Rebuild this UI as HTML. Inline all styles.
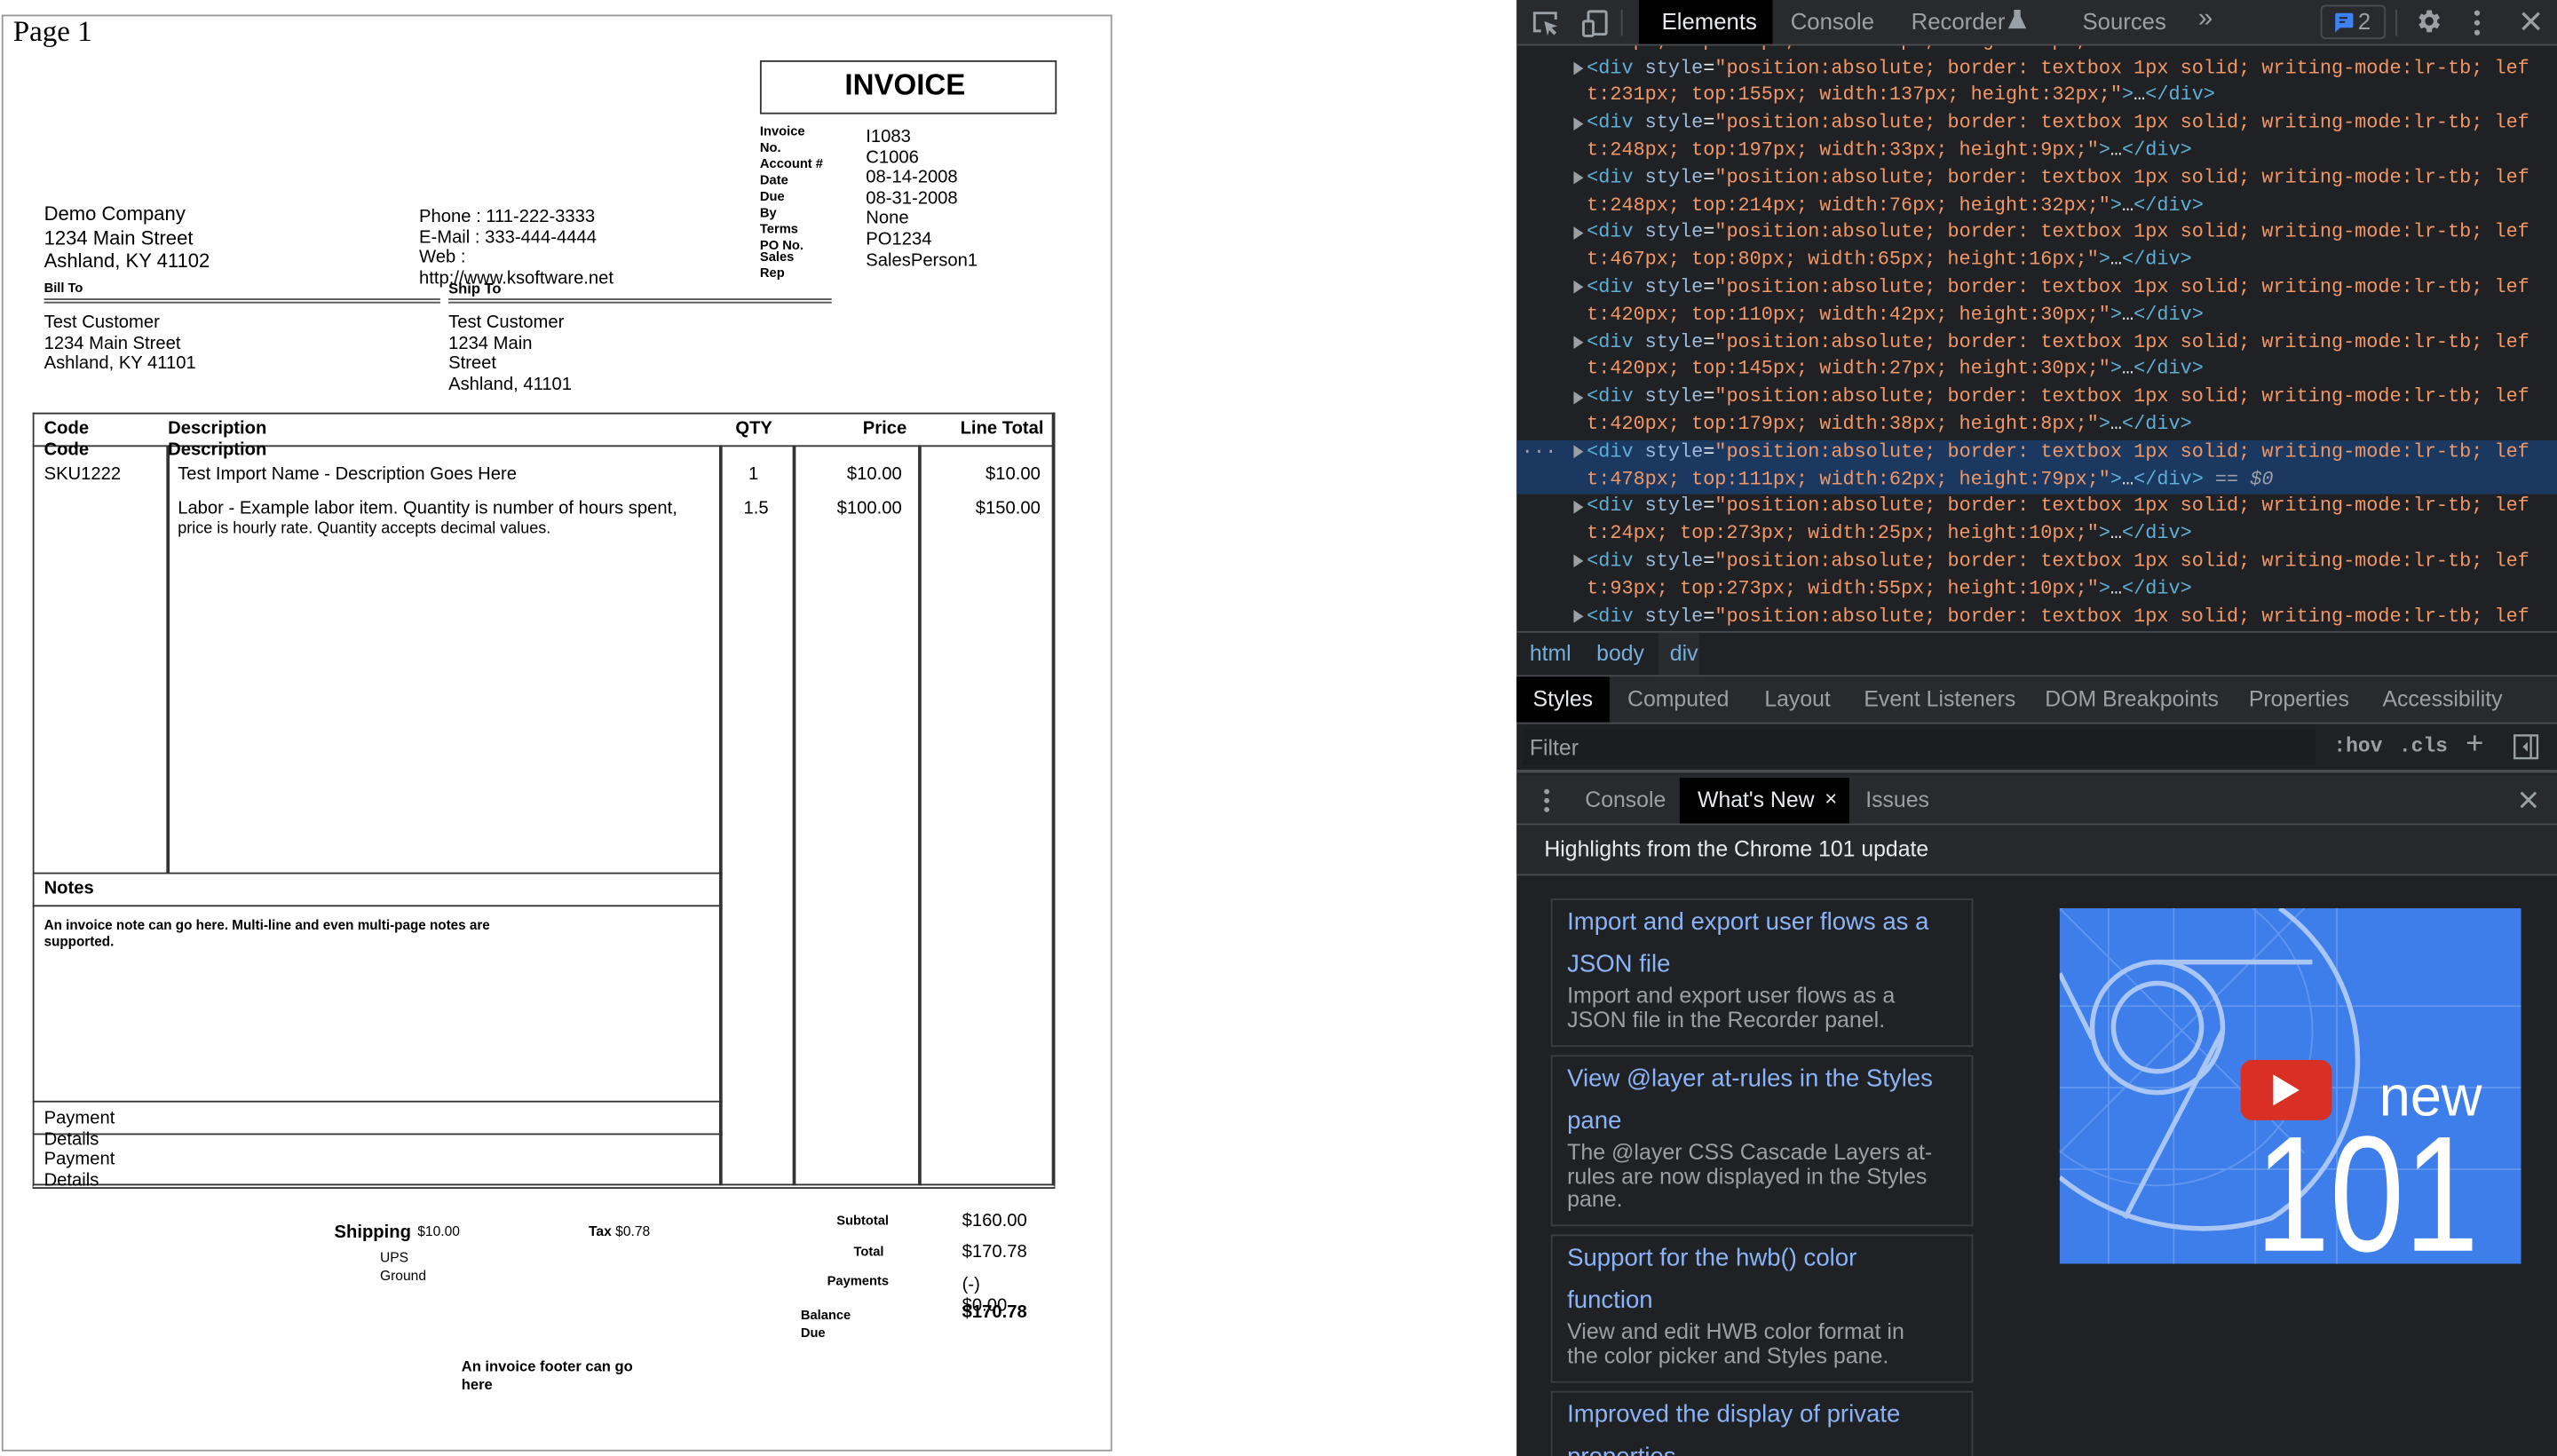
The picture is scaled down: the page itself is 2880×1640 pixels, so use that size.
<!DOCTYPE html>
<html><head><meta charset="utf-8">
<style>
html,body{margin:0;padding:0;width:2880px;height:1640px;overflow:hidden;background:#fff}
#s{position:absolute;left:0;top:0;width:1568px;height:893px;transform:scale(1.83673);transform-origin:0 0;font-family:"Liberation Sans",Arial,sans-serif}
.a{position:absolute;white-space:nowrap;line-height:1}
.b{font-weight:bold}
.r{text-align:right}
.hl{position:absolute;background:#333}
#dt{position:absolute;left:930px;top:0;width:638px;height:893px;background:#202124;overflow:hidden;color:#9aa0a6}
#dt .a{color:#9aa0a6}
.m{font-family:"Liberation Mono","DejaVu Sans Mono",monospace;font-size:11.9px}
.row{position:absolute;left:43px;height:16.8px;line-height:16.8px;white-space:pre}
.t{color:#5db0d7}.n{color:#9bbbdc}.v{color:#f29766}.w{color:#e8eaed}
.tri{position:absolute;left:35px;width:0;height:0;border-left:6px solid #9aa0a6;border-top:4px solid transparent;border-bottom:4px solid transparent}
.card{position:absolute;left:21px;width:257px;border:1px solid #3c3d40}
.ct{position:absolute;left:9px;color:#8ab4f8;font-size:15px;line-height:26px;white-space:nowrap}
.cd{position:absolute;left:9px;color:#9aa0a6;font-size:13.6px;line-height:14.6px;white-space:nowrap}
</style></head><body><div id="s">
<div style="position:absolute;left:1px;top:9px;width:679px;height:879px;border:1px solid #999"></div>
<div class="a" style="left:8px;top:10px;font-family:'Liberation Serif',serif;font-size:18px">Page 1</div>
<div style="position:absolute;left:466px;top:37px;width:180px;height:31px;border:1px solid #333"></div>
<div class="a b" style="left:464px;top:43px;width:182px;text-align:center;font-size:18px">INVOICE</div>
<div class="a b" style="left:466px;top:76px;font-size:8px;line-height:10px;white-space:normal;width:60px">Invoice<br>No.<br>Account #<br>Date<br>Due<br>By<br>Terms<br>PO No.</div>
<div class="a b" style="left:466px;top:153px;font-size:8px;line-height:10px">Sales<br>Rep</div>
<div class="a" style="left:531px;top:78px;font-size:11px;line-height:12.6px">I1083<br>C1006<br>08-14-2008<br>08-31-2008<br>None<br>PO1234<br>SalesPerson1</div>
<div class="a" style="left:27px;top:124px;font-size:12px;line-height:14.5px">Demo Company<br>1234 Main Street<br>Ashland, KY 41102</div>
<div class="a" style="left:257px;top:127px;font-size:11px;line-height:12.6px">Phone : 111-222-3333<br>E-Mail : 333-444-4444<br>Web :<br>http://www.ksoftware.net</div>
<div class="a b" style="left:27px;top:173px;font-size:8px">Bill To</div>
<div class="a b" style="left:275px;top:173px;font-size:9px">Ship To</div>
<div style="position:absolute;left:27px;top:183px;width:243px;height:1px;border-top:1px solid #555;border-bottom:1px solid #555"></div>
<div style="position:absolute;left:275px;top:183px;width:235px;height:1px;border-top:1px solid #555;border-bottom:1px solid #555"></div>
<div class="a" style="left:27px;top:192px;font-size:11px;line-height:12.6px">Test Customer<br>1234 Main Street<br>Ashland, KY 41101</div>
<div class="a" style="left:275px;top:192px;font-size:11px;line-height:12.6px">Test Customer<br>1234 Main<br>Street<br>Ashland, 41101</div>
<div style="position:absolute;left:20px;top:253px;width:625px;height:472px;border:1px solid #333;border-bottom:3px double #333"></div>
<div class="hl" style="left:20px;top:273px;width:627px;height:1px"></div>
<div class="hl" style="left:102px;top:273px;width:2px;height:263px"></div>
<div class="hl" style="left:441px;top:273px;width:2px;height:454px"></div>
<div class="hl" style="left:486px;top:273px;width:2px;height:454px"></div>
<div class="hl" style="left:563px;top:273px;width:2px;height:454px"></div>
<div class="hl" style="left:645px;top:253px;width:2px;height:474px"></div>
<div class="a b" style="left:27px;top:258px;font-size:11px">Code</div>
<div class="a b" style="left:103px;top:258px;font-size:11px">Description</div>
<div class="a b" style="left:451px;top:258px;font-size:11px">QTY</div>
<div class="a b r" style="left:456px;width:100px;top:258px;font-size:11px">Price</div>
<div class="a b r" style="left:540px;width:100px;top:258px;font-size:11px">Line Total</div>
<div class="a b" style="left:27px;top:271px;font-size:11px">Code</div>
<div class="a b" style="left:103px;top:271px;font-size:11px">Description</div>
<div class="a" style="left:27px;top:286px;font-size:11px">SKU1222</div>
<div class="a" style="left:109px;top:286px;font-size:11px">Test Import Name - Description Goes Here</div>
<div class="a" style="left:459px;top:286px;font-size:11px">1</div>
<div class="a r" style="left:453px;width:100px;top:286px;font-size:11px">$10.00</div>
<div class="a r" style="left:538px;width:100px;top:286px;font-size:11px">$10.00</div>
<div class="a" style="left:109px;top:307px;font-size:11px">Labor - Example labor item. Quantity is number of hours spent,</div>
<div class="a" style="left:109px;top:320px;font-size:9.8px">price is hourly rate. Quantity accepts decimal values.</div>
<div class="a" style="left:456px;top:307px;font-size:11px">1.5</div>
<div class="a r" style="left:453px;width:100px;top:307px;font-size:11px">$100.00</div>
<div class="a r" style="left:538px;width:100px;top:307px;font-size:11px">$150.00</div>
<div class="hl" style="left:20px;top:535px;width:423px;height:1px"></div>
<div class="hl" style="left:20px;top:555px;width:423px;height:1px"></div>
<div class="a b" style="left:27px;top:540px;font-size:11px">Notes</div>
<div class="a b" style="left:27px;top:562px;font-size:8.3px;line-height:10px">An invoice note can go here. Multi-line and even multi-page notes are<br>supported.</div>
<div class="hl" style="left:20px;top:675px;width:423px;height:1px"></div>
<div class="hl" style="left:20px;top:695px;width:423px;height:1px"></div>
<div class="a" style="left:27px;top:680px;font-size:11px;line-height:12.5px">Payment<br>Details<br>Payment<br>Details</div>
<div class="a b" style="left:205px;top:751px;font-size:11px">Shipping</div>
<div class="a" style="left:256px;top:751px;font-size:8.5px">$10.00</div>
<div class="a" style="left:233px;top:766px;font-size:8.5px;line-height:11px">UPS<br>Ground</div>
<div class="a" style="left:361px;top:751px;font-size:8.5px"><b>Tax</b> $0.78</div>
<div class="a b r" style="left:445px;width:100px;top:745px;font-size:8px">Subtotal</div>
<div class="a b r" style="left:442px;width:100px;top:764px;font-size:8px">Total</div>
<div class="a b r" style="left:445px;width:100px;top:782px;font-size:8px">Payments</div>
<div class="a b" style="left:491px;top:801px;font-size:8px;line-height:11px">Balance<br>Due</div>
<div class="a" style="left:590px;top:744px;font-size:11px">$160.00</div>
<div class="a" style="left:590px;top:763px;font-size:11px">$170.78</div>
<div class="a" style="left:590px;top:782px;font-size:11px;line-height:13px">(-)<br>$0.00</div>
<div class="a b" style="left:590px;top:800px;font-size:11px">$170.78</div>
<div class="a b" style="left:283px;top:833px;font-size:9px;line-height:11px">An invoice footer can go<br>here</div>

<div id="dt">
 <div style="position:absolute;left:0;top:28px;width:638px;height:359px;overflow:hidden" class="m">
  <div style="position:absolute;left:0;top:241.6px;width:638px;height:33.6px;background:#1a3860"></div>
  <div class="a w" style="left:3px;top:243px;font-size:12px;color:#9aa0a6">···</div>
  <div class="row" style="top:-11.2px"><span class="v">t:24px; top:114px; width:33px; height:32px;"</span><span class="t">&gt;</span><span class="w">…</span><span class="t">&lt;/div&gt;</span></div>
  <div id="rows"></div>
 </div>
 <div style="position:absolute;left:0;top:0;width:638px;height:27px;background:#292a2d;border-bottom:1px solid #494c50"></div>
 <svg style="position:absolute;left:8px;top:5px" width="50" height="18" viewBox="0 0 50 18"><path d="M7 14H3V3h13v4" fill="none" stroke="#9aa0a6" stroke-width="1.6"/><path d="M9 8l8 3-3.5 1 3 3-1.5 1.5-3-3-1 3.5z" fill="#9aa0a6"/><rect x="36" y="2" width="11" height="14" rx="1" fill="none" stroke="#9aa0a6" stroke-width="1.6"/><rect x="33" y="8" width="6" height="9" rx="1" fill="#292a2d" stroke="#9aa0a6" stroke-width="1.6"/></svg>
 <div style="position:absolute;left:64px;top:6px;width:1px;height:16px;background:#494c50"></div>
 <div style="position:absolute;left:75px;top:0;width:82px;height:27px;background:#000"></div>
 <div class="a" style="left:89px;top:6px;font-size:14px;color:#e8eaed">Elements</div>
 <div class="a" style="left:168px;top:6px;font-size:14px">Console</div>
 <div class="a" style="left:242px;top:6px;font-size:14px">Recorder</div>
 <svg style="position:absolute;left:301px;top:5px" width="12" height="14" viewBox="0 0 12 14"><path d="M4 1h4v4l3.5 7.5H0.5L4 5z" fill="#9aa0a6"/></svg>
 <div class="a" style="left:347px;top:6px;font-size:14px">Sources</div>
 <div class="a" style="left:418px;top:4px;font-size:16px">»</div>
 <div style="position:absolute;left:493px;top:3px;width:38px;height:19px;border:1px solid #494c50;border-radius:3px"></div>
 <svg style="position:absolute;left:500px;top:7px" width="14" height="14" viewBox="0 0 14 14"><path d="M2 1h10a1 1 0 011 1v7a1 1 0 01-1 1H5l-3 3V2a1 1 0 011-1z" fill="#3b82f6"/><path d="M4.5 4h5M4.5 6.5h3.5" stroke="#292a2d" stroke-width="1.2"/></svg>
 <div class="a" style="left:516px;top:6px;font-size:14px">2</div>
 <div style="position:absolute;left:539px;top:6px;width:1px;height:16px;background:#494c50"></div>
 <svg style="position:absolute;left:550px;top:4px" width="18" height="18" viewBox="0 0 24 24"><path fill="#9aa0a6" d="M19.4 13a7.6 7.6 0 000-2l2.1-1.6-2-3.5-2.5 1a7.3 7.3 0 00-1.7-1L14.9 3h-4l-.4 2.9a7.3 7.3 0 00-1.7 1l-2.5-1-2 3.5L6.4 11a7.6 7.6 0 000 2l-2.1 1.6 2 3.5 2.5-1a7.3 7.3 0 001.7 1l.4 2.9h4l.4-2.9a7.3 7.3 0 001.7-1l2.5 1 2-3.5zM12.9 15.5a3.5 3.5 0 110-7 3.5 3.5 0 010 7z"/></svg>
 <svg style="position:absolute;left:586px;top:5px" width="6" height="18" viewBox="0 0 6 18"><circle cx="3" cy="3" r="1.7" fill="#9aa0a6"/><circle cx="3" cy="9" r="1.7" fill="#9aa0a6"/><circle cx="3" cy="15" r="1.7" fill="#9aa0a6"/></svg>
 <svg style="position:absolute;left:616px;top:7px" width="12" height="12" viewBox="0 0 12 12"><path d="M1 1l10 10M11 1L1 11" stroke="#9aa0a6" stroke-width="1.8"/></svg>
 <div style="position:absolute;left:0;top:387px;width:638px;height:1px;background:#494c50"></div>
 <div style="position:absolute;left:87px;top:388px;width:25px;height:26px;background:#2a2b2e"></div>
 <div class="a" style="left:8px;top:394px;font-size:13.5px;color:#74b0dd">html</div>
 <div class="a" style="left:49px;top:394px;font-size:13.5px;color:#74b0dd">body</div>
 <div class="a" style="left:94px;top:394px;font-size:13.5px;color:#74b0dd">div</div>
 <div style="position:absolute;left:0;top:414px;width:638px;height:1px;background:#494c50"></div>
 <div style="position:absolute;left:0;top:415px;width:638px;height:28px;background:#292a2d"></div>
 <div style="position:absolute;left:0;top:415px;width:57px;height:28px;background:#000"></div>
 <div class="a" style="left:10px;top:422px;font-size:13.5px;color:#e8eaed">Styles</div>
 <div class="a" style="left:68px;top:422px;font-size:13.5px">Computed</div>
 <div class="a" style="left:152px;top:422px;font-size:13.5px">Layout</div>
 <div class="a" style="left:213px;top:422px;font-size:13.5px">Event Listeners</div>
 <div class="a" style="left:324px;top:422px;font-size:13.5px">DOM Breakpoints</div>
 <div class="a" style="left:449px;top:422px;font-size:13.5px">Properties</div>
 <div class="a" style="left:531px;top:422px;font-size:13.5px">Accessibility</div>
 <div style="position:absolute;left:0;top:443px;width:638px;height:1px;background:#494c50"></div>
 <div style="position:absolute;left:4px;top:447px;width:486px;height:22px;background:#1c1d20"></div>
 <div class="a" style="left:8px;top:452px;font-size:13.5px">Filter</div>
 <div class="a m" style="left:501px;top:452px;font-size:12.5px;font-weight:bold">:hov</div>
 <div class="a m" style="left:541px;top:452px;font-size:12.5px;font-weight:bold">.cls</div>
 <div class="a" style="left:582px;top:447px;font-size:19px">+</div>
 <svg style="position:absolute;left:611px;top:450px" width="16" height="16" viewBox="0 0 16 16"><rect x="1" y="1" width="14" height="14" fill="none" stroke="#9aa0a6" stroke-width="1.3"/><path d="M11 1v14" stroke="#9aa0a6" stroke-width="1.3"/><path d="M9 5l-3 3 3 3z" fill="#9aa0a6"/></svg>
 <div style="position:absolute;left:0;top:472px;width:638px;height:2px;background:#494c50"></div>
 <div style="position:absolute;left:0;top:475px;width:638px;height:30px;background:#292a2d"></div>
 <svg style="position:absolute;left:16px;top:483px" width="5" height="16" viewBox="0 0 5 16"><circle cx="2.5" cy="2.5" r="1.6" fill="#9aa0a6"/><circle cx="2.5" cy="8" r="1.6" fill="#9aa0a6"/><circle cx="2.5" cy="13.5" r="1.6" fill="#9aa0a6"/></svg>
 <div class="a" style="left:42px;top:484px;font-size:13.5px">Console</div>
 <div style="position:absolute;left:100px;top:477px;width:104px;height:28px;background:#000"></div>
 <div class="a" style="left:111px;top:484px;font-size:13.5px;color:#e8eaed">What's New</div>
 <div class="a" style="left:189px;top:483px;font-size:13px;color:#e8eaed">×</div>
 <div class="a" style="left:214px;top:484px;font-size:13.5px">Issues</div>
 <svg style="position:absolute;left:615px;top:485px" width="11" height="11" viewBox="0 0 11 11"><path d="M1 1l9 9M10 1L1 10" stroke="#9aa0a6" stroke-width="1.6"/></svg>
 <div style="position:absolute;left:0;top:505px;width:638px;height:1px;background:#494c50"></div>
 <div style="position:absolute;left:0;top:506px;width:638px;height:30px;background:#28292c"></div>
 <div class="a" style="left:17px;top:514px;font-size:13.5px;color:#e8eaed">Highlights from the Chrome 101 update</div>
 <div style="position:absolute;left:0;top:536px;width:638px;height:1px;background:#494c50"></div>
 <div class="card" style="top:551px;height:89px"><div class="ct" style="top:1px">Import and export user flows as a</div><div class="ct" style="top:27px">JSON file</div><div class="cd" style="top:52px">Import and export user flows as a<br>JSON file in the Recorder panel.</div></div>
 <div class="card" style="top:647px;height:103px"><div class="ct" style="top:1px">View @layer at-rules in the Styles</div><div class="ct" style="top:27px">pane</div><div class="cd" style="top:52px">The @layer CSS Cascade Layers at-<br>rules are now displayed in the Styles<br>pane.</div></div>
 <div class="card" style="top:757px;height:89px"><div class="ct" style="top:1px">Support for the hwb() color</div><div class="ct" style="top:27px">function</div><div class="cd" style="top:52px">View and edit HWB color format in<br>the color picker and Styles pane.</div></div>
 <div class="card" style="top:853px;height:60px"><div class="ct" style="top:1px">Improved the display of private</div><div class="ct" style="top:27px">properties</div></div>
 <svg style="position:absolute;left:333px;top:557px" width="283" height="218" viewBox="0 0 283 218">
  <rect width="283" height="218" fill="#3d7eea"/>
  <g stroke="#6a9cf0" stroke-width="1" fill="none" opacity="0.8">
   <path d="M0 60H283M0 110H283M0 160H283M30 0V218M70 0V218M120 0V218M170 0V218"/>
   <path d="M0 0L150 150M150 0L0 150"/>
   <circle cx="60" cy="75" r="95"/>
  </g>
  <g stroke="#a9c6f7" stroke-width="3" fill="none">
   <circle cx="60" cy="73" r="40"/>
   <circle cx="60" cy="73" r="27"/>
   <path d="M135 0A115 115 0 0 1 130 190A140 140 0 0 1 0 165"/>
   <path d="M60 33H155M100 75L40 190M20 80L0 40"/>
  </g>
  <rect x="111" y="93" width="56" height="37" rx="7" fill="#d93025"/>
  <path d="M131 102l16 9.5-16 9.5z" fill="#fff"/>
  <text x="196" y="127" font-family="Liberation Sans,sans-serif" font-size="35" fill="#fff" textLength="63" lengthAdjust="spacingAndGlyphs">new</text>
  <text x="120" y="210" font-family="Liberation Sans,sans-serif" font-size="101" fill="#fff" textLength="137" lengthAdjust="spacingAndGlyphs">101</text>
 </svg>
</div>
</div>
<script>
var vals=[["t:231px; top:155px; width:137px; height:32px;",""],["t:248px; top:197px; width:33px; height:9px;",""],["t:248px; top:214px; width:76px; height:32px;",""],["t:467px; top:80px; width:65px; height:16px;",""],["t:420px; top:110px; width:42px; height:30px;",""],["t:420px; top:145px; width:27px; height:30px;",""],["t:420px; top:179px; width:38px; height:8px;",""],["t:478px; top:111px; width:62px; height:79px;"," == <i>$0</i>"],["t:24px; top:273px; width:25px; height:10px;",""],["t:93px; top:273px; width:55px; height:10px;",""],[null,""]];
var h="";
for(var i=0;i<vals.length;i++){var t1=-11.2+16.8*(1+2*i);
h+='<div class="tri" style="top:'+(t1+4.4)+'px"></div><div class="row" style="top:'+t1+'px"><span class="t">&lt;div</span> <span class="n">style</span><span class="w">=</span><span class="v">"position:absolute; border: textbox 1px solid; writing-mode:lr-tb; lef</span></div>';
if(vals[i][0]){h+='<div class="row" style="top:'+(t1+16.8)+'px"><span class="v">'+vals[i][0]+'"</span><span class="t">&gt;</span><span class="w">…</span><span class="t">&lt;/div&gt;</span><span style="color:#9aa0a6">'+vals[i][1]+'</span></div>';}}
document.getElementById('rows').outerHTML=h;
</script>
</body></html>
